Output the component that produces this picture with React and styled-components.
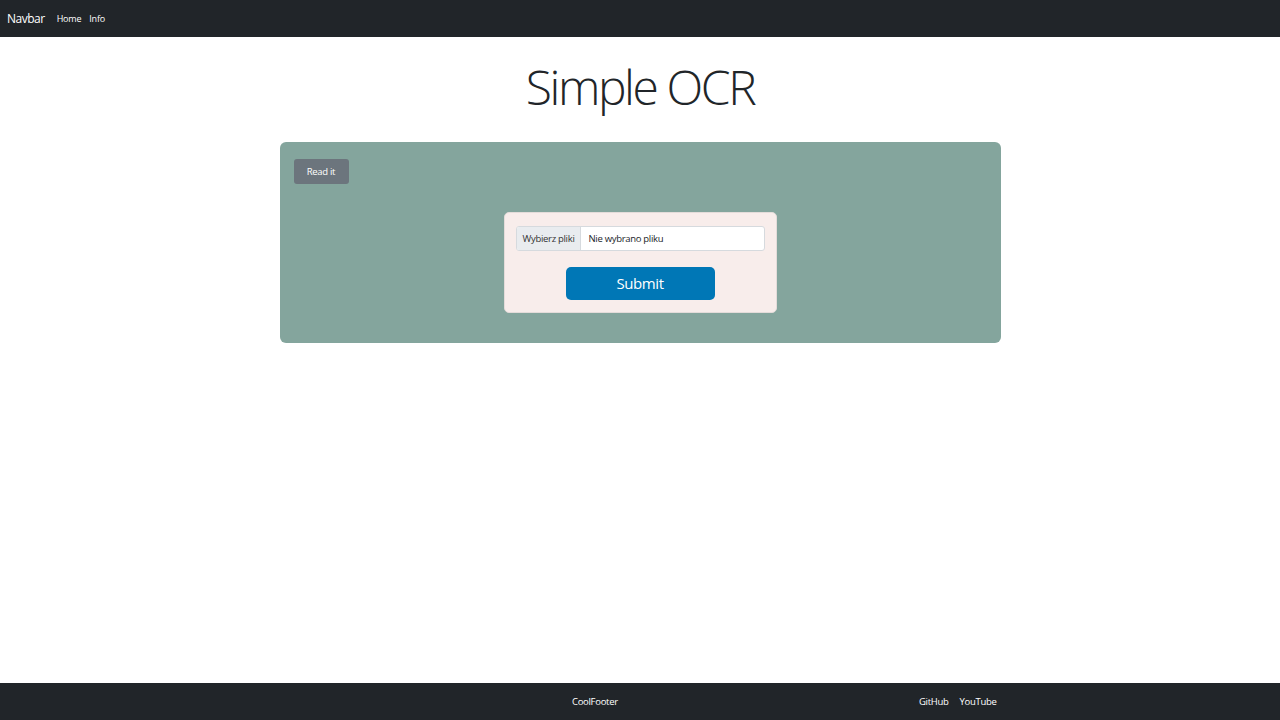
import React from 'react';
import styled, { createGlobalStyle } from 'styled-components';

const GlobalStyle = createGlobalStyle`
  html, body {
    margin: 0;
    padding: 0;
    background: #fff;
    font-family: "Open Sans", "Noto Sans", sans-serif;
    color: #212529;
  }
`;

const Page = styled.div`
  display: flex;
  flex-direction: column;
  min-height: 100vh;
`;

const Nav = styled.nav`
  display: flex;
  align-items: center;
  height: 37px;
  padding: 0 7px;
  background: #212529;
`;

const Brand = styled.a`
  color: #fff;
  font-size: 12px;
  letter-spacing: -0.5px;
  margin-right: 12px;
`;

const NavLink = styled.a`
  color: #fff;
  font-size: 9px;
  letter-spacing: -0.2px;
  margin-right: 8px;
`;

const Main = styled.main`
  flex: 1;
  display: flex;
  flex-direction: column;
  align-items: center;
`;

const Title = styled.h1`
  margin: 21px 0 26px;
  font-size: 48px;
  font-weight: 300;
  line-height: 1.2;
  letter-spacing: -2.4px;
  color: #212529;
`;

const Panel = styled.section`
  width: 721px;
  height: 201px;
  box-sizing: border-box;
  padding: 17px 14px;
  background: #84a59d;
  border-radius: 6px;
  display: flex;
  flex-direction: column;
`;

const ReadButton = styled.button`
  align-self: flex-start;
  width: 55px;
  height: 25px;
  border: none;
  border-radius: 3px;
  background: #6c757d;
  color: #fff;
  font-family: inherit;
  font-size: 9.5px;
  letter-spacing: -0.3px;
  cursor: pointer;
`;

const Card = styled.form`
  align-self: center;
  margin-top: 28px;
  width: 273px;
  box-sizing: border-box;
  padding: 13px 11px 12px;
  background: #f8edeb;
  border: 1px solid #e4dcda;
  border-radius: 5px;
  display: flex;
  flex-direction: column;
  align-items: center;
  gap: 16px;
`;

const FileField = styled.label`
  display: flex;
  width: 100%;
  height: 25px;
  box-sizing: border-box;
  border: 1px solid #d6dade;
  border-radius: 3px;
  overflow: hidden;
  background: #fff;
  font-size: 9.5px;
  letter-spacing: -0.3px;
`;

const FileButton = styled.span`
  display: flex;
  align-items: center;
  padding: 0 6px;
  background: #e9ecef;
  border-right: 1px solid #d6dade;
  color: #333;
`;

const FileName = styled.span`
  display: flex;
  align-items: center;
  padding: 0 7px;
  color: #212529;
`;

const Submit = styled.button`
  width: 149px;
  height: 33px;
  border: none;
  border-radius: 5px;
  background: #0077b6;
  color: #fff;
  font-family: inherit;
  font-size: 15px;
  letter-spacing: -0.4px;
  cursor: pointer;
`;

const Footer = styled.footer`
  height: 37px;
  background: #212529;
  display: flex;
  justify-content: center;
`;

const FooterInner = styled.div`
  width: 721px;
  display: grid;
  grid-template-columns: 1fr auto 1fr;
  align-items: center;
  padding-right: 4px;
  box-sizing: border-box;
`;

const FooterTitle = styled.span`
  grid-column: 2;
  color: #fff;
  font-size: 9.5px;
  letter-spacing: -0.3px;
  margin-left: -66px;
`;

const FooterLinks = styled.div`
  justify-self: end;
  display: flex;
  gap: 11px;
`;

const FooterLink = styled.a`
  color: #fff;
  font-size: 9.5px;
  letter-spacing: -0.3px;
`;

export default function App() {
  return (
    <Page>
      <GlobalStyle />
      <Nav>
        <Brand>Navbar</Brand>
        <NavLink>Home</NavLink>
        <NavLink>Info</NavLink>
      </Nav>
      <Main>
        <Title>Simple OCR</Title>
        <Panel>
          <ReadButton type="button">Read it</ReadButton>
          <Card onSubmit={(e) => e.preventDefault()}>
            <FileField>
              <FileButton>Wybierz pliki</FileButton>
              <FileName>Nie wybrano pliku</FileName>
            </FileField>
            <Submit type="submit">Submit</Submit>
          </Card>
        </Panel>
      </Main>
      <Footer>
        <FooterInner>
          <FooterTitle>CoolFooter</FooterTitle>
          <FooterLinks>
            <FooterLink>GitHub</FooterLink>
            <FooterLink>YouTube</FooterLink>
          </FooterLinks>
        </FooterInner>
      </Footer>
    </Page>
  );
}
